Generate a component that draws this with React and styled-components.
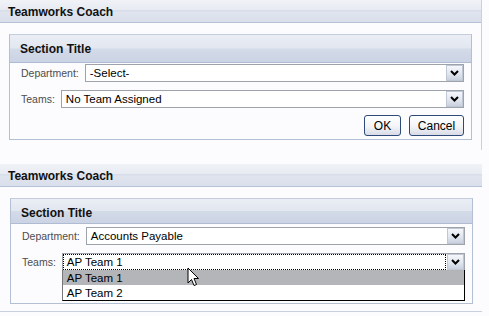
import styled, { createGlobalStyle } from "styled-components"

const GlobalStyle = createGlobalStyle`
  html, body {
    margin: 0;
    padding: 0;
    background: #fcfbfd;
    font-family: "Liberation Sans", Arial, sans-serif;
  }
`

const Page = styled.div`
  width: 489px;
  height: 316px;
  overflow: hidden;
  display: flex;
  flex-direction: column;
`

const Panel = styled.div`
  width: 482px;
  height: ${(p) => p.$height}px;
  margin-top: ${(p) => p.$top || 0}px;
  box-sizing: border-box;
  border-right: ${(p) => (p.$rightLine ? "1px solid #c9d1e0" : "none")};
  border-bottom: ${(p) => (p.$bottomLine ? "1px solid #c9d1e0" : "none")};
  display: flex;
  flex-direction: column;
`

const PanelHeader = styled.div`
  height: 23px;
  box-sizing: border-box;
  padding: 5px 0 0 8px;
  border-bottom: 1px solid #b6c1d5;
  background: linear-gradient(
    #f0f2f7 0%,
    #e7ebf2 44%,
    #d6dce9 48%,
    #dfe4ee 56%,
    #d9dfeb 100%
  );
  font-size: 12px;
  font-weight: bold;
  color: #111;
`

const Section = styled.div`
  margin: 11px 0 0 ${(p) => p.$left}px;
  width: 463px;
  box-sizing: border-box;
  border: 1px solid #b3bfd3;
  border-top-color: #c3cddd;
  background: #fcfbfd;
`

const SectionHeader = styled.div`
  height: ${(p) => p.$height}px;
  box-sizing: border-box;
  padding: 7px 0 0 10px;
  border-bottom: 1px solid #aebbd0;
  background: linear-gradient(
    #eaedf4 0%,
    #e2e7f0 48%,
    #d3dae8 52%,
    #cbd3e4 100%
  );
  font-size: 12px;
  font-weight: bold;
  color: #111;
`

const Body = styled.div`
  display: flex;
  flex-direction: column;
  gap: ${(p) => p.$gap}px;
  padding: ${(p) => p.$top}px 7px ${(p) => p.$bottom}px 11px;
`

const Row = styled.div`
  display: flex;
  align-items: center;
  gap: 6px;
`

const Label = styled.span`
  font-size: 10.5px;
  color: #4d4d4d;
  white-space: nowrap;
`

const SelectBox = styled.div`
  position: relative;
  flex: 1;
  height: 18px;
  box-sizing: border-box;
  border: 1px solid #9ea3ab;
  background: #fff;
  display: flex;
  align-items: stretch;
`

const SelectValue = styled.div`
  flex: 1;
  display: flex;
  align-items: center;
  padding-left: 3px;
  margin: ${(p) => (p.$focused ? "0 1px 0 0" : "0")};
  border: ${(p) => (p.$focused ? "1px dotted #000" : "1px solid transparent")};
  font-size: 11.5px;
  color: #000;
  white-space: nowrap;
`

const ArrowButton = styled.div`
  width: 17px;
  box-sizing: border-box;
  border: 1px solid #bfc6d4;
  background: linear-gradient(#f5f7fb, #dfe4ee 60%, #c9d0de);
  display: flex;
  align-items: center;
  justify-content: center;
`

const Options = styled.div`
  position: absolute;
  top: 100%;
  left: -1px;
  right: -1px;
  box-sizing: border-box;
  border: 1px solid #000;
  border-top: none;
  border-left-color: #777;
  background: #fff;
  z-index: 2;
`

const Option = styled.div`
  height: 15px;
  display: flex;
  align-items: center;
  padding-left: 4px;
  font-size: 11.5px;
  color: #000;
  background: ${(p) => (p.$active ? "#b4b5b9" : "#fff")};
`

const Actions = styled.div`
  display: flex;
  justify-content: flex-end;
  gap: 8px;
  margin-top: -1px;
`

const Button = styled.button`
  width: ${(p) => p.$width}px;
  height: 21px;
  padding: 0;
  border: 1px solid #2d4a78;
  border-radius: 3px;
  background: linear-gradient(#ffffff 0%, #f3f4f7 55%, #d9dce6 100%);
  font-family: "Liberation Sans", Arial, sans-serif;
  font-size: 12px;
  color: #000;
`

const Cursor = styled.svg`
  position: absolute;
  left: 124px;
  top: 13px;
  z-index: 3;
`

const Chevron = () => (
  <svg width="11" height="8" viewBox="0 0 11 8">
    <polyline
      points="2,2 5.5,5.5 9,2"
      fill="none"
      stroke="#000"
      strokeWidth="2"
    />
  </svg>
)

const Select = ({ value, focused, options, children }) => (
  <SelectBox>
    <SelectValue $focused={focused}>{value}</SelectValue>
    <ArrowButton>
      <Chevron />
    </ArrowButton>
    {options && (
      <Options>
        {options.map((o, i) => (
          <Option key={o} $active={i === 0}>
            {o}
          </Option>
        ))}
      </Options>
    )}
    {children}
  </SelectBox>
)

const App = () => (
  <Page>
    <GlobalStyle />
    <Panel $height={150} $rightLine>
      <PanelHeader>Teamworks Coach</PanelHeader>
      <Section $left={9}>
        <SectionHeader $height={28}>Section Title</SectionHeader>
        <Body $gap={8} $top={1} $bottom={3}>
          <Row>
            <Label>Department:</Label>
            <Select value="-Select-" />
          </Row>
          <Row>
            <Label>Teams:</Label>
            <Select value="No Team Assigned" />
          </Row>
          <Actions>
            <Button $width={37}>OK</Button>
            <Button $width={55}>Cancel</Button>
          </Actions>
        </Body>
      </Section>
    </Panel>
    <Panel $height={148} $top={14} $bottomLine>
      <PanelHeader>Teamworks Coach</PanelHeader>
      <Section $left={10}>
        <SectionHeader $height={25}>Section Title</SectionHeader>
        <Body $gap={8} $top={3} $bottom={32}>
          <Row>
            <Label>Department:</Label>
            <Select value="Accounts Payable" />
          </Row>
          <Row>
            <Label>Teams:</Label>
            <Select value="AP Team 1" focused options={["AP Team 1", "AP Team 2"]}>
              <Cursor width="13" height="20" viewBox="0 0 13 20">
                <path
                  d="M1 1 L1 16 L4.5 12.5 L7 18.5 L9.5 17.5 L7 11.5 L11.5 11.5 Z"
                  fill="#fff"
                  stroke="#000"
                  strokeWidth="1"
                  strokeLinejoin="round"
                />
              </Cursor>
            </Select>
          </Row>
        </Body>
      </Section>
    </Panel>
  </Page>
)

export default App
